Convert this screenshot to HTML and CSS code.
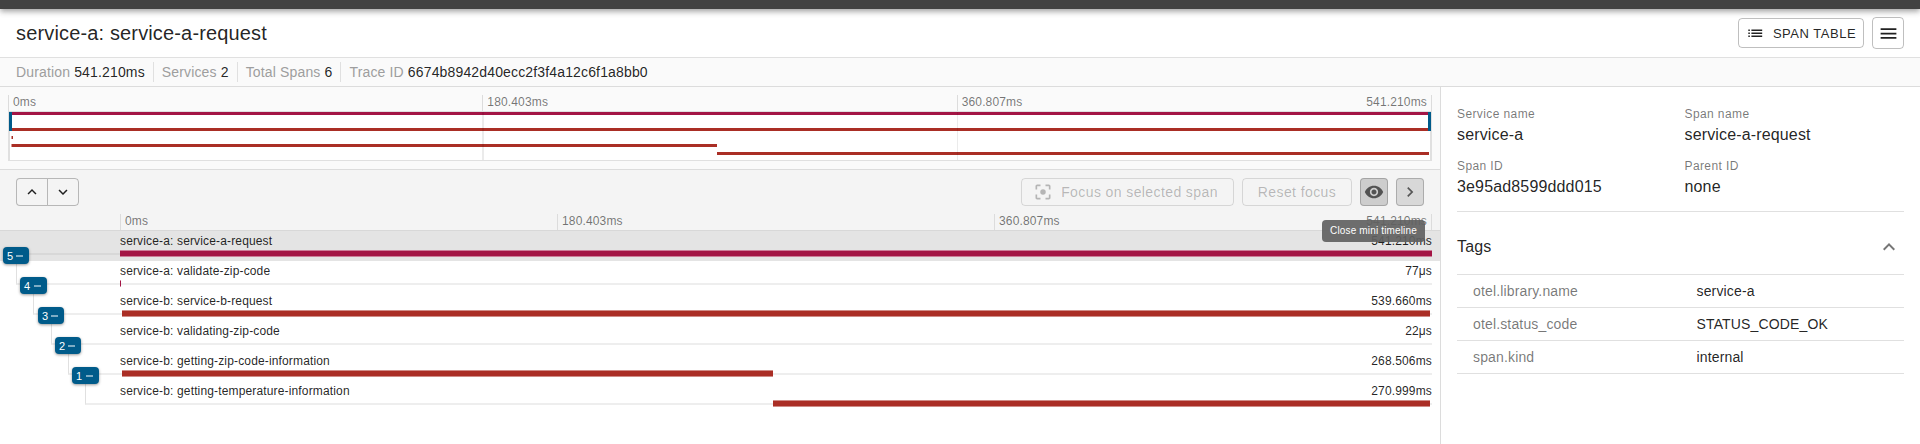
FILE: index.html
```html
<!DOCTYPE html>
<html lang="en">
<head>
<meta charset="utf-8">
<title>service-a: service-a-request</title>
<link rel="stylesheet" href="styles.css">
</head>
<body>
<div class="appbar"></div>
<header class="header">
  <h1 class="title">service-a: service-a-request</h1>
  <button class="btn btn-table"><svg viewBox="0 0 24 24" width="18.5" height="18.5"><path d="M3 13h2v-2H3v2zm0 4h2v-2H3v2zm0-8h2V7H3v2zm4 4h14v-2H7v2zm0 4h14v-2H7v2zM7 7v2h14V7H7z"/></svg>SPAN TABLE</button>
  <button class="btn btn-menu"><svg viewBox="0 0 24 24" width="21" height="21"><path d="M3 18h18v-2H3v2zm0-5h18v-2H3v2zm0-7v2h18V6H3z"/></svg></button>
</header>
<div class="summary">
  <div class="fact"><span>Duration</span> 541.210ms</div>
  <div class="fact"><span>Services</span> 2</div>
  <div class="fact"><span>Total Spans</span> 6</div>
  <div class="fact"><span>Trace ID</span> 6674b8942d40ecc2f3f4a12c6f1a8bb0</div>
</div>
<div class="content">
  <main class="trace">
    <section class="mini">
      <div class="axis"><div>0ms</div><div>180.403ms</div><div>360.807ms</div><div class="last">541.210ms</div></div>
      <div class="graph">
        <svg width="1424" height="50">
          <rect class="paper" x="0" y="0" width="1424" height="50"/>
          <rect class="line" x="0" y="0" width="1424" height="1"/>
          <rect class="line" x="0" y="49" width="1424" height="1"/>
          <rect class="line" x="0" y="0" width="2" height="50"/>
          <rect class="line" x="1422" y="0" width="2" height="50"/>
          <rect class="svc-a" x="3" y="1" width="1418" height="3"/>
          <rect class="svc-b" x="3" y="17" width="1418" height="3"/>
          <rect class="svc-b" x="3.5" y="25" width="1.5" height="3"/>
          <rect class="svc-b" x="3.5" y="33" width="705.5" height="3"/>
          <rect class="svc-b" x="709" y="41" width="712" height="3"/>
          <rect class="grid" x="474" y="1" width="2" height="48"/>
          <rect class="grid" x="949" y="1" width="1" height="48"/>
          <rect class="handle" x="1" y="1" width="3" height="19"/>
          <rect class="handle" x="1420" y="1" width="3" height="19"/>
        </svg>
      </div>
    </section>
    <section class="tools">
      <div class="toolbar">
        <div class="stepper">
          <button><svg viewBox="0 0 24 24" width="18" height="18"><path d="M7.41 15.41L12 10.83l4.59 4.58L18 14l-6-6-6 6z"/></svg></button>
          <button><svg viewBox="0 0 24 24" width="18" height="18"><path d="M7.41 8.59L12 13.17l4.59-4.58L18 10l-6 6-6-6z"/></svg></button>
        </div>
        <button class="tbtn focus"><svg viewBox="0 0 24 24" width="20" height="20"><path d="M5 15H3v4c0 1.1.9 2 2 2h4v-2H5v-4z"/><path d="M5 5h4V3H5c-1.1 0-2 .9-2 2v4h2V5z"/><path d="M19 3h-4v2h4v4h2V5c0-1.1-.9-2-2-2z"/><path d="M19 19h-4v2h4c1.1 0 2-.9 2-2v-4h-2v4z"/><circle cx="12" cy="12" r="3.3"/></svg>Focus on selected span</button>
        <button class="tbtn reset">Reset focus</button>
        <button class="tbtn square eye"><svg viewBox="0 0 24 24" width="20" height="20"><path d="M12 4.5C7 4.5 2.73 7.61 1 12c1.73 4.39 6 7.5 11 7.5s9.27-3.11 11-7.5c-1.73-4.39-6-7.5-11-7.5zM12 17c-2.76 0-5-2.24-5-5s2.24-5 5-5 5 2.24 5 5-2.24 5-5 5zm0-8c-1.66 0-3 1.34-3 3s1.34 3 3 3 3-1.34 3-3-1.34-3-3-3z"/></svg><span class="tooltip">Close mini timeline</span></button>
        <button class="tbtn square next"><svg viewBox="0 0 24 24" width="20" height="20"><path d="M10 6L8.59 7.41 13.17 12l-4.58 4.59L10 18l6-6z"/></svg></button>
      </div>
      <div class="axis axis-main"><div>0ms</div><div>180.403ms</div><div>360.807ms</div><div class="last">541.210ms</div></div>
    </section>
    <section class="rows">
      <div class="row selected" style="--indent:16px"><b class="bar svc-a" style="--from:0px;--len:1312px"></b><span>service-a: service-a-request</span><span>541.210ms</span><i class="badge" style="--x:3px;--w:26px">5<em></em></i></div>
      <div class="row" style="--indent:16px"><b class="bar svc-a" style="--from:0px;--len:1px"></b><span>service-a: validate-zip-code</span><span>77μs</span><i class="badge" style="--x:20px;--w:27px">4<em></em></i></div>
      <div class="row" style="--indent:33px"><b class="bar svc-b" style="--from:2px;--len:1308px"></b><span>service-b: service-b-request</span><span>539.660ms</span><i class="badge" style="--x:38px;--w:26px">3<em></em></i></div>
      <div class="row" style="--indent:51px"><span>service-b: validating-zip-code</span><span>22μs</span><i class="badge" style="--x:55px;--w:26px">2<em></em></i></div>
      <div class="row" style="--indent:68px"><b class="bar svc-b" style="--from:2px;--len:651px"></b><span>service-b: getting-zip-code-information</span><span>268.506ms</span><i class="badge" style="--x:72px;--w:27px">1<em></em></i></div>
      <div class="row" style="--indent:85px"><b class="bar svc-b" style="--from:653px;--len:657px"></b><span>service-b: getting-temperature-information</span><span>270.999ms</span></div>
    </section>
  </main>
  <aside class="details">
    <dl class="facts">
      <div><dt>Service name</dt><dd>service-a</dd></div>
      <div><dt>Span name</dt><dd>service-a-request</dd></div>
      <div><dt>Span ID</dt><dd>3e95ad8599ddd015</dd></div>
      <div><dt>Parent ID</dt><dd>none</dd></div>
    </dl>
    <div class="tags-head">Tags<svg viewBox="0 0 24 24" width="24" height="24"><path d="M12 8l-6 6 1.41 1.41L12 10.83l4.59 4.58L18 14z"/></svg></div>
    <div class="tag"><span>otel.library.name</span><span>service-a</span></div>
    <div class="tag"><span>otel.status_code</span><span>STATUS_CODE_OK</span></div>
    <div class="tag"><span>span.kind</span><span>internal</span></div>
  </aside>
</div>
</body>
</html>
```

FILE: styles.css
```css
*, *::before { box-sizing: border-box; }
body {
  margin: 0;
  height: 444px;
  overflow: hidden;
  display: flex;
  flex-direction: column;
  background: #fff;
  color: rgba(0, 0, 0, .87);
  font-family: "Liberation Sans", Arial, sans-serif;
}
button {
  display: flex;
  align-items: center;
  justify-content: center;
  margin: 0;
  padding: 0;
  background: none;
  border: 1px solid rgba(0, 0, 0, .25);
  border-radius: 4px;
  color: inherit;
  font-family: inherit;
}
svg { display: block; fill: currentColor; }
.appbar {
  flex: none;
  height: 9px;
  background: #424242;
  position: relative;
  z-index: 2;
  box-shadow: 0 2px 4px -1px rgba(0,0,0,.2), 0 4px 5px rgba(0,0,0,.14), 0 1px 10px rgba(0,0,0,.12);
}
.header {
  flex: none;
  height: 49px;
  padding: 0 16px;
  display: flex;
  align-items: center;
  border-bottom: 1px solid #e0e0e0;
}
.title { margin: 0; flex: 1; font-size: 20px; font-weight: 400; letter-spacing: .15px; line-height: 32px; }
.btn-table { width: 126px; height: 30px; font-size: 13px; letter-spacing: .52px; margin-right: 8px; }
.btn-table svg { margin-right: 8.5px; }
.btn-menu { width: 32px; height: 32px; }
.summary {
  flex: none;
  height: 29px;
  padding: 4px 16px;
  display: flex;
  background: #fafafa;
  border-bottom: 1px solid #dcdcdc;
}
.fact { font-size: 14px; line-height: 20px; letter-spacing: .15px; padding-right: 8px; margin-right: 8px; border-right: 1px solid #e0e0e0; }
.fact:last-child { border: 0; }
.fact span { color: #9e9e9e; }
.content { flex: 1; display: flex; }
.trace { width: 1441px; border-right: 1px solid #dcdcdc; }
.mini { height: 83px; padding: 8px 8px 0; background: #fafafa; border-bottom: 1px solid #dcdcdc; }
.axis { display: grid; grid-template-columns: 474.33px 474.33px 1fr auto; height: 16px; font-size: 12px; line-height: 14px; letter-spacing: .15px; color: rgba(0,0,0,.54); }
.axis div { height: 16px; border-left: 1px solid #dcdcdc; padding-left: 4px; }
.axis .last { border-left: 0; border-right: 1px solid #dcdcdc; padding: 0 4px 0 0; }
.paper { fill: #fff; }
.line { fill: #e0e0e0; }
.grid { fill: rgba(0,0,0,.08); }
.svc-a { fill: #a31545; background-color: #a31545; }
.svc-b { fill: #aa2e25; background-color: #aa2e25; }
.handle { fill: #005b8a; }
.tools { height: 61px; padding-top: 8px; background: #f4f4f4; border-bottom: 1px solid #d8d8d8; }
.toolbar { display: flex; height: 28px; padding: 0 16px; margin-bottom: 8px; }
.stepper { display: flex; margin-right: auto; }
.stepper button { width: 31px; border-radius: 4px 0 0 4px; border-right: 0; }
.stepper button + button { width: 32px; border-radius: 0 4px 4px 0; border-right: 1px solid rgba(0,0,0,.25); }
.tbtn { height: 28px; margin-left: 8px; font-size: 14px; letter-spacing: .4px; color: rgba(0,0,0,.26); border-color: rgba(0,0,0,.12); }
.focus { width: 213px; padding-right: 4px; }
.focus svg { margin-right: 8px; }
.reset { width: 110px; }
.square { width: 28px; background: #d8d8d8; color: rgba(0,0,0,.6); border-color: rgba(0,0,0,.2); position: relative; }
.eye { background: #cdcdcd; }
.tooltip {
  position: absolute;
  z-index: 3;
  top: 41px;
  right: -38px;
  width: 103px;
  height: 22px;
  border-radius: 4px;
  background: rgba(97,97,97,.92);
  color: #fff;
  font-size: 10px;
  line-height: 21px;
  letter-spacing: .15px;
  text-align: center;
  white-space: nowrap;
}
.axis-main { margin: 0 8px 0 120px; grid-template-columns: 437px 437px 1fr auto; }
.row {
  position: relative;
  height: 30px;
  padding: 2px 8px 0 120px;
  display: flex;
  justify-content: space-between;
  font-size: 12px;
  line-height: 16px;
  letter-spacing: .15px;
}
.selected { background: #e4e4e4; }
.row::before {
  content: "";
  position: absolute;
  left: var(--indent);
  right: 8px;
  top: -8px;
  height: 32px;
  border-left: 1px solid #e0e0e0;
  border-bottom: 2px solid #eee;
}
.selected::before { top: 22px; height: 2px; left: 16px; border-left: 0; border-color: #d8d8d8; }
.row span { position: relative; }
.bar {
  position: absolute;
  left: calc(120px + var(--from));
  width: var(--len);
  top: 19px;
  height: 7px;
  border: solid rgba(255,255,255,.45);
  border-width: 1px 0;
}
.badge {
  position: absolute;
  z-index: 1;
  left: var(--x);
  width: var(--w);
  top: 16px;
  height: 17px;
  padding: 0 6px 0 4px;
  display: flex;
  align-items: center;
  justify-content: space-between;
  border-radius: 4px;
  background: #005b8a;
  color: #fff;
  font-size: 11px;
  font-style: normal;
  box-shadow: 0 1px 3px rgba(0,0,0,.4);
}
.badge em { flex: none; width: 7px; height: 2px; background: #7eacc4; }
.details { flex: 1; padding: 16px 16px 0; }
.facts { margin: 0; display: grid; grid-template-columns: 227.5px 1fr; height: 109px; border-bottom: 1px solid #e0e0e0; grid-auto-rows: 52px; }
.facts dt { font-size: 12px; line-height: 22px; letter-spacing: .4px; color: rgba(0,0,0,.54); }
.facts dd { margin: 0; font-size: 16px; line-height: 20px; letter-spacing: .15px; }
.tags-head { height: 63px; padding: 8px 3px 0 0; display: flex; align-items: center; justify-content: space-between; font-size: 16px; letter-spacing: .15px; border-bottom: 1px solid #e0e0e0; }
.tags-head svg { color: rgba(0,0,0,.54); }
.tag { height: 33px; padding: 0 16px; display: grid; grid-template-columns: 223.5px 1fr; align-items: center; font-size: 14px; letter-spacing: .15px; border-bottom: 1px solid #e0e0e0; }
.tag span:first-child { color: rgba(0,0,0,.54); }
```
